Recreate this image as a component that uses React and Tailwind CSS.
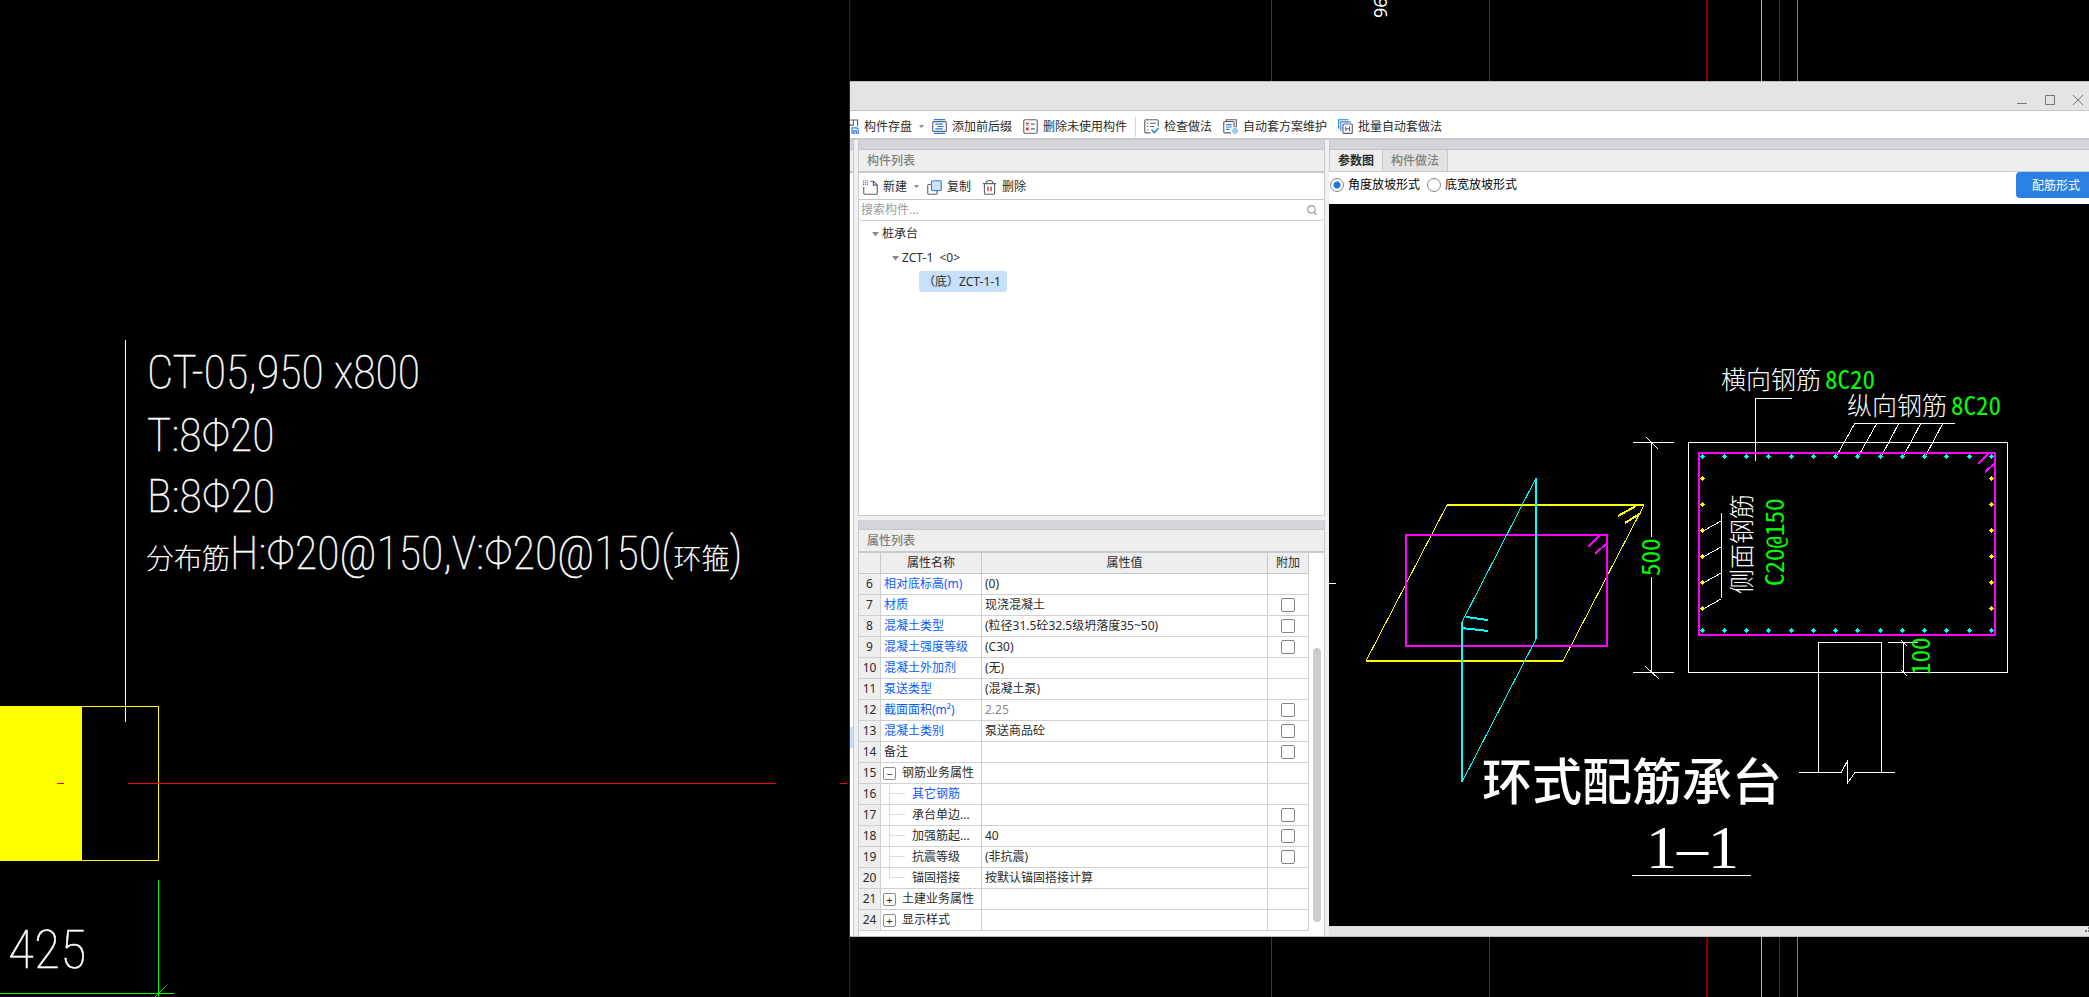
import { Fragment } from 'react';

const UI_FONT = "font-['Noto_Sans','Noto_Sans_CJK_SC',sans-serif]";

const gridLines = [
  { x: 1271, color: '#006400', w: 1 },
  { x: 1489, color: '#006400', w: 1 },
  { x: 1706, color: '#800000', w: 2 },
  { x: 1761, color: '#00ffff', w: 1 },
  { x: 1779, color: '#c00000', w: 1 },
  { x: 1797, color: '#00b4b4', w: 1 },
];

const properties = [
  { no: 6, name: '相对底标高(m)', value: '(0)', blue: true },
  { no: 7, name: '材质', value: '现浇混凝土', blue: true, check: true },
  { no: 8, name: '混凝土类型', value: '(粒径31.5砼32.5级坍落度35~50)', blue: true, check: true },
  { no: 9, name: '混凝土强度等级', value: '(C30)', blue: true, check: true },
  { no: 10, name: '混凝土外加剂', value: '(无)', blue: true },
  { no: 11, name: '泵送类型', value: '(混凝土泵)', blue: true },
  { no: 12, name: '截面面积(m²)', value: '2.25', blue: true, check: true, muted: true },
  { no: 13, name: '混凝土类别', value: '泵送商品砼', blue: true, check: true },
  { no: 14, name: '备注', value: '', check: true },
  { no: 15, name: '钢筋业务属性', value: '', group: '−' },
  { no: 16, name: '其它钢筋', value: '', blue: true, child: true },
  { no: 17, name: '承台单边...', value: '', child: true, check: true },
  { no: 18, name: '加强筋起...', value: '40', child: true, check: true },
  { no: 19, name: '抗震等级', value: '(非抗震)', child: true, check: true },
  { no: 20, name: '锚固搭接', value: '按默认锚固搭接计算', child: true, last: true },
  { no: 21, name: '土建业务属性', value: '', group: '+' },
  { no: 24, name: '显示样式', value: '', group: '+' },
];

const Caret = () => (
  <svg width="7" height="5" viewBox="0 0 7 5">
    <path d="M0 0h7L3.5 4.5z" fill="#8a8a8a" />
  </svg>
);

const Icon = ({ children }) => (
  <svg width="15" height="15" viewBox="0 0 16 16" fill="none" stroke="#5a6270" strokeWidth="1.2" className="shrink-0">
    {children}
  </svg>
);

const SaveIcon = () => (
  <Icon>
    <path d="M0 1h14.5v7M4 6.5h6V1" />
    <path d="M8.6 9.5h5l1.6 1.4v4.3H8.6z" stroke="#2b7de1" />
    <path d="M10.3 15v-2.3h3V15" stroke="#2b7de1" fill="#cfe2fa" />
  </Icon>
);

const AffixIcon = () => (
  <Icon>
    <path d="M2 .7h12M2 15.3h12" stroke="#2b7de1" />
    <rect x=".8" y="2.8" width="14.4" height="10.4" rx="1" />
    <path d="M3.5 5.5h8M5.5 8h7M3.5 10.5h8" stroke="#2b7de1" />
  </Icon>
);

const UnusedIcon = () => (
  <Icon>
    <rect x=".8" y=".8" width="14.4" height="14.4" rx="1.5" />
    <path d="M3.3 4l2.6 2.8M5.9 4L3.3 6.8M3.3 9.2L5.9 12M5.9 9.2L3.3 12" stroke="#d9262c" />
    <path d="M8.5 5.5h4M8.5 10.5h4" />
  </Icon>
);

const CheckIcon = () => (
  <Icon>
    <path d="M7 14.8H2.2a1.4 1.4 0 0 1-1.4-1.4V2.2A1.4 1.4 0 0 1 2.2.8h11.6a1.4 1.4 0 0 1 1.4 1.4V8" />
    <path d="M3 4.5h1.5M3 8h1.5M3 11.5h1.5M6.5 4.5H13M6.5 8h4" />
    <path d="M8 11.5l3 3 4.8-5" stroke="#2b7de1" strokeWidth="1.6" />
  </Icon>
);

const SchemeIcon = () => (
  <Icon>
    <path d="M3.5 2.5V.8h10.7V9" />
    <path d="M8.5 14.8H1.8a1 1 0 0 1-1-1V3.7a1 1 0 0 1 1-1h9a1 1 0 0 1 1 1V9" />
    <path d="M3.3 6h6M3.3 8.5h6M3.3 11h3.5" stroke="#2b7de1" />
    <circle cx="12.8" cy="12.8" r="2.6" fill="#a9cbf5" stroke="#7fb0ee" strokeDasharray="1.5 1" />
  </Icon>
);

const BatchIcon = () => (
  <Icon>
    <path d="M.7 10.5V.8h10.5M3 13V3h10.5" stroke="#2b7de1" />
    <rect x="5.3" y="5.3" width="10" height="10" rx="1" />
    <path d="M8.3 8v4.8M12.3 8v4.8M8.3 10.4h4" />
  </Icon>
);

const NewIcon = () => (
  <Icon>
    <path d="M7.5 1.3h3.7l4 4v8.7a1.2 1.2 0 0 1-1.2 1.2H2A1.2 1.2 0 0 1 .8 14V7.5M11 1.5v4h4" />
    <path d="M0 .8h5.4M0 2.8h5.4M0 4.8h5.4" stroke="#2b7de1" strokeDasharray="1.2 .9" strokeWidth="1.3" />
  </Icon>
);

const CopyIcon = () => (
  <Icon>
    <path d="M4 4.8H2A1.2 1.2 0 0 0 .8 6v8A1.2 1.2 0 0 0 2 15.2h7.5a1.2 1.2 0 0 0 1.2-1.2v-2.5" />
    <rect x="4.8" y=".8" width="10.4" height="10.4" rx="1.2" fill="#cfe2fa" stroke="#2b7de1" />
  </Icon>
);

const TrashIcon = () => (
  <Icon>
    <path d="M1 3.8h14M4.5 3.5a3.5 3 0 0 1 7 0M2.6 4v10a1.2 1.2 0 0 0 1.2 1.2h8.4a1.2 1.2 0 0 0 1.2-1.2V4" />
    <path d="M6.3 7v5M9.7 7v5" stroke="#d9262c" strokeWidth="1.4" />
  </Icon>
);

function ToolButton({ icon, label, caret }) {
  return (
    <button className="flex items-center gap-[5px] whitespace-nowrap">
      {icon}
      <span>{label}</span>
      {caret && (
        <svg width="5" height="4" viewBox="0 0 5 4" className="-mr-[3px] ml-0.5">
          <path d="M0 0h5L2.5 3.2z" fill="#8a8a8a" />
        </svg>
      )}
    </button>
  );
}

// vertical axis lines that run behind the dialog
function AxisStrip({ className, height, children }) {
  return (
    <div className={`overflow-hidden ${className}`}>
      <svg width="1239" height={height} viewBox={`850 0 1239 ${height}`} shapeRendering="crispEdges">
        {gridLines.map((l) => (
          <rect key={l.x} x={l.x} y="0" width={l.w} height={height} fill={l.color} />
        ))}
        {children}
      </svg>
    </div>
  );
}

function PlanView() {
  return (
    <svg width="849" height="997" viewBox="0 0 849 997" fill="none" shapeRendering="crispEdges">
      <path d="M125.5 340V722" stroke="#fff" />
      <rect x="0" y="706" width="82" height="155" fill="#ff0" />
      <path d="M0 706.5H158.5V860.5H0" stroke="#ff0" />
      <path d="M57 783.5h7M128 783.5H776M840 783.5h7" stroke="#f00" />
      <path d="M158.5 880V997M0 993.5H174M155 997l11-11" stroke="#0f0" />
      <g
        fill="#fff"
        stroke="#fff"
        strokeWidth="0.5"
        className="text-[46px] font-thin font-['Roboto_Condensed','Roboto','Noto_Sans_CJK_SC',sans-serif]"
      >
        <text x="147" y="388">CT-05,950 x800</text>
        <text x="147" y="451">T:8Φ20</text>
        <text x="147" y="512">B:8Φ20</text>
        <text x="146" y="569">
          <tspan className="text-[28px]">分布筋</tspan>H:Φ20@150,V:Φ20@150(<tspan className="text-[28px]">环箍</tspan>)
        </text>
        <text x="8" y="968" className="text-[54px]">425</text>
      </g>
    </svg>
  );
}

const barX = [1702, 1724, 1746, 1768, 1791, 1813, 1835, 1857, 1880, 1902, 1924, 1946, 1969, 1991];
const barY = [478, 504, 530, 556, 582, 608];

const Bar = ({ x, y, color }) => (
  <path d={`M${x - 2} ${y}h5v1h-5zM${x - 1} ${y - 1}h3v3h-3zM${x} ${y - 2}h1v5h-1z`} fill={color} stroke="none" />
);

function SectionDrawing() {
  return (
    <svg width="760" height="722" viewBox="1329 204 760 722" fill="none" shapeRendering="crispEdges">
      {/* hoop bars in axonometric view */}
      <path d="M1329 583.5h7" stroke="#fff" />
      <g stroke="#ff0">
        <path d="M1447 505L1366 661M1644 505L1563 661" />
        <path d="M1447 505H1644M1366 661H1563M1618 516L1636 506M1625 523L1641 513" strokeWidth="2" />
      </g>
      <g stroke="#f0f" strokeWidth="2">
        <rect x="1406" y="535" width="201" height="111" />
        <path d="M1588 547l12-12M1595 554l12-11" />
      </g>
      <g stroke="#0ff">
        <path d="M1536 478L1462 622M1536 639L1462 782" />
        <path d="M1536 478V639M1462 622V782M1466 617l22 3M1462 628l26 3" strokeWidth="2" />
      </g>

      {/* section 1-1 */}
      <g stroke="#fff">
        <path d="M1633 442.5h41M1633 672.5h41M1651.5 442V537M1651.5 577V672M1646 437l12 12M1645 666l14 13" />
        <rect x="1688.5" y="442.5" width="319" height="230" />
        <path d="M1755.5 461V398.5H1792" />
        <path d="M1855 423.5H1955M1855 423l-18 32M1877 423l-18 32M1899 423l-17 32M1921 423l-17 32M1943 423l-17 32" />
        <path d="M1721.5 513V598M1705 530l16-9M1705 556l16-9M1705 582l16-9M1705 608l16-9" />
        <path d="M1818.5 772V642.5H1881.5V772" />
        <path d="M1888 642.5h30M1903.5 642v30M1901 640l6 6M1901 670l6 6" />
        <path d="M1799 772.5H1841L1847.5 761V783L1855 772.5H1895" />
        <path d="M1632 875.5H1751" />
      </g>
      <g stroke="#f0f" strokeWidth="2">
        <rect x="1699" y="453" width="296" height="182" />
        <path d="M1978 464l10-10M1985 472l10-9" />
      </g>
      {barX.map((x) => (
        <Fragment key={x}>
          <Bar x={x} y={456} color="#0ff" />
          <Bar x={x} y={630} color="#0ff" />
        </Fragment>
      ))}
      {barY.map((y) => (
        <Fragment key={y}>
          <Bar x={1702} y={y} color="#ff0" />
          <Bar x={1991} y={y} color="#ff0" />
        </Fragment>
      ))}

      <g fill="#fff" className="font-['Noto_Sans_CJK_SC',sans-serif] text-[25px] font-light">
        <text x="1721" y="389">横向钢筋</text>
        <text x="1847" y="415">纵向钢筋</text>
        <text transform="translate(1751 594) rotate(-90)">侧面钢筋</text>
      </g>
      <g fill="#0f0" className="font-['Noto_Sans_Mono_CJK_SC','Liberation_Serif',serif] text-[25px] font-light">
        <text x="1825" y="389">8C20</text>
        <text x="1951" y="415">8C20</text>
        <text transform="translate(1660 576) rotate(-90)">500</text>
        <text transform="translate(1930 675) rotate(-90)">100</text>
        <text transform="translate(1784 586) rotate(-90)">C20@150</text>
      </g>
      <text x="1482" y="800" fill="#fff" className="font-['Noto_Sans_CJK_SC',sans-serif] text-[50px] font-medium">环式配筋承台</text>
      <text x="1646" y="868" fill="#fff" className="font-['Liberation_Serif',serif] text-[62px]">1–1</text>
    </svg>
  );
}

function NameCell({ row }) {
  if (row.group) {
    return (
      <div className="flex items-center gap-1.5 pl-0.5">
        <button className="flex size-[13px] items-center justify-center rounded-[2px] border border-[#8a8a8a] text-[11px] leading-none">
          {row.group}
        </button>
        <span>{row.name}</span>
      </div>
    );
  }
  if (row.child) {
    return (
      <div className="flex h-[20px] items-center pl-2">
        <div className="flex h-full w-4 flex-col">
          <div className="h-[10px] border-b border-l border-[#dcdcdc]"></div>
          {!row.last && <div className="flex-1 border-l border-[#dcdcdc]"></div>}
        </div>
        <span className="pl-[7px]">{row.name}</span>
      </div>
    );
  }
  return <span className="pl-[3px]">{row.name}</span>;
}

function PropertyTable() {
  return (
    <div className="flex flex-1 bg-white">
      <table className="flex-1 table-fixed border-separate border-spacing-0 self-start">
        <colgroup>
          <col className="w-[22px]" />
          <col className="w-[101px]" />
          <col />
          <col className="w-[41px]" />
        </colgroup>
        <thead>
          <tr className="h-[21px] bg-[#eee] [&>th]:border-r [&>th]:border-b [&>th]:border-[#c8c8c8] [&>th]:p-0 [&>th]:font-normal">
            <th></th>
            <th>属性名称</th>
            <th>属性值</th>
            <th>附加</th>
          </tr>
        </thead>
        <tbody>
          {properties.map((row) => (
            <tr key={row.no} className="h-[21px] [&>td]:border-r [&>td]:border-b [&>td]:border-[#d0d0d0] [&>td]:p-0 [&>td]:whitespace-nowrap">
              <td className="bg-[#eee] text-center">{row.no}</td>
              <td className={row.blue ? 'text-[#0a5cff]' : ''}>
                <NameCell row={row} />
              </td>
              <td className={row.muted ? 'text-[#8c8c8c]' : ''}>
                <span className="pl-[3px]">{row.value}</span>
              </td>
              <td>
                {row.check && (
                  <input type="checkbox" aria-label={row.name} className="mx-auto block size-[14px] appearance-none rounded-[2px] border border-[#858585] bg-white" />
                )}
              </td>
            </tr>
          ))}
        </tbody>
      </table>
      <div className="flex w-[15px] shrink-0 justify-center pt-[95px]">
        <div className="h-[274px] w-2 rounded-full bg-[#cdcdcd]"></div>
      </div>
    </div>
  );
}

function PanelTitle({ children }) {
  return (
    <>
      <div className="h-[10px] border-b border-[#c3c6cc] bg-[#d4d5db]"></div>
      <h2 className="flex h-[23px] items-center border-b-2 border-[#c8cacf] bg-[#eee] pl-2 font-medium text-[#808080]">{children}</h2>
    </>
  );
}

function ComponentColumn() {
  return (
    <div className="flex w-[467px] shrink-0 flex-col">
      <section className="flex h-[376px] flex-col border-x border-b border-[#c8cacf] bg-white">
        <PanelTitle>构件列表</PanelTitle>
        <div className="flex h-[27px] shrink-0 items-center gap-[11px] border-b border-[#c8c8c8] pt-0.5 pl-1">
          <ToolButton icon={<NewIcon />} label="新建" caret />
          <ToolButton icon={<CopyIcon />} label="复制" />
          <ToolButton icon={<TrashIcon />} label="删除" />
        </div>
        <label className="flex h-[21px] shrink-0 items-center rounded-sm border-b border-[#c8c8c8] pr-[7px] pl-0.5">
          <input type="text" placeholder="搜索构件..." aria-label="搜索构件" className="min-w-0 flex-1 outline-none placeholder:text-[#9a9a9a]" />
          <svg width="10" height="10" viewBox="0 0 10 10" fill="none" stroke="#999" strokeWidth="1.2">
            <circle cx="4.4" cy="4.4" r="3.7" />
            <path d="M6.8 7.2l2.7 2.4" />
          </svg>
        </label>
        <ul className="pt-px leading-6">
          <li>
            <div className="flex items-center gap-[3px] pl-[13px]"><Caret />桩承台</div>
            <ul>
              <li>
                <div className="flex items-center gap-[3px] pl-[33px]"><Caret />ZCT-1&nbsp; &lt;0&gt;</div>
                <ul>
                  <li className="pl-[60px]">
                    <span className="inline-block h-[21px] rounded-[3px] bg-[#c8dff9] pr-1.5 pl-1 leading-[21px]">（底）ZCT-1-1</span>
                  </li>
                </ul>
              </li>
            </ul>
          </li>
        </ul>
      </section>
      <section className="mt-1 flex flex-1 flex-col border-x border-[#c8cacf]">
        <PanelTitle>属性列表</PanelTitle>
        <PropertyTable />
      </section>
    </div>
  );
}

function DrawingColumn() {
  return (
    <div className="ml-1 flex min-w-0 flex-1 flex-col bg-white">
      <div className="h-[10px] border-b border-l border-[#c3c6cc] bg-[#d4d5db]"></div>
      <div className="flex h-[22px] border-b border-l border-[#c8cacf] bg-[#eee] font-bold">
        <button className="border-r border-[#c8cacf] px-2">参数图</button>
        <button className="border-r border-[#c8cacf] bg-[#e2e2e2] px-2 font-medium text-[#808080]">构件做法</button>
      </div>
      <div className="flex h-8 items-start text-black">
        <div className="flex h-[26px] items-center gap-[7px] pl-px">
          {['角度放坡形式', '底宽放坡形式'].map((label, i) => (
            <label key={label} className="flex items-center gap-1">
              <input
                type="radio"
                name="slope"
                defaultChecked={i === 0}
                className="size-[14px] appearance-none rounded-full border border-[#858585] bg-white checked:bg-[radial-gradient(circle,#1f7ae0_3px,#fff_4px)]"
              />
              {label}
            </label>
          ))}
        </div>
        <button className="ml-auto h-[26px] rounded-l bg-[#2b80e4] pt-px pr-[9px] pl-4 text-white">配筋形式</button>
      </div>
      <div className="flex-1 overflow-hidden bg-black">
        <SectionDrawing />
      </div>
      <div className="flex h-[10px] items-end justify-end bg-[#e4e4e4] pb-1">
        <svg width="4" height="5" viewBox="0 0 4 5" fill="#777">
          <path d="M0 3h2v2H0zM3 0h1v2H3zM3 3h1v2H3z" />
        </svg>
      </div>
    </div>
  );
}

function Dialog() {
  return (
    <div className={`flex h-[856px] flex-col border-t border-b border-[#bdbdbd] bg-[#f0f0f0] text-xs leading-[18px] text-[#2b2b2b] ${UI_FONT}`}>
      <div className="flex h-[29px] shrink-0 items-center justify-end gap-[18px] border-b border-[#c6c7ca] bg-[#e4e4e4] pt-2 pr-1.5">
        <button aria-label="最小化">
          <svg width="10" height="10" viewBox="0 0 10 10" stroke="#777"><path d="M0 8.5h10" /></svg>
        </button>
        <button aria-label="最大化">
          <svg width="10" height="10" viewBox="0 0 10 10" fill="none" stroke="#777"><path d="M.5.5h9v9h-9z" /></svg>
        </button>
        <button aria-label="关闭">
          <svg width="10" height="10" viewBox="0 0 10 10" stroke="#777"><path d="M0 0l10 10M10 0L0 10" /></svg>
        </button>
      </div>
      <div className="flex h-[29px] shrink-0 items-center gap-[11px] overflow-hidden border-b-2 border-[#c8cacf] bg-white pt-1">
        <div className="-ml-1.5"><ToolButton icon={<SaveIcon />} label="构件存盘" caret /></div>
        <ToolButton icon={<AffixIcon />} label="添加前后缀" />
        <ToolButton icon={<UnusedIcon />} label="删除未使用构件" />
        <span className="-mx-[3px] h-5 w-px bg-[#d8d8d8]"></span>
        <ToolButton icon={<CheckIcon />} label="检查做法" />
        <ToolButton icon={<SchemeIcon />} label="自动套方案维护" />
        <ToolButton icon={<BatchIcon />} label="批量自动套做法" />
      </div>
      <div className="flex min-h-0 flex-1">
        <div className="mr-1 flex w-1 shrink-0 flex-col border-r border-[#c8c8c8] bg-white">
          <div className="h-[10px] border-b border-[#c3c6cc] bg-[#d4d5db]"></div>
          <div className="h-[23px] border-b-2 border-[#c8cacf] bg-[#eee]"></div>
          <div className="mt-[554px] h-[21px] bg-[#c8dff9]"></div>
        </div>
        <ComponentColumn />
        <DrawingColumn />
      </div>
    </div>
  );
}

export default function App() {
  return (
    <div className="flex min-h-screen overflow-hidden bg-black">
      <div className="w-[850px] shrink-0 border-r border-[#2a2a2a]">
        <PlanView />
      </div>
      <div className="flex min-w-0 flex-1 flex-col">
        <AxisStrip className="h-[81px]" height={81}>
          <text transform="translate(1387 18) rotate(-90)" fill="#fff" className="font-['Noto_Sans',sans-serif] text-[18px]">96</text>
        </AxisStrip>
        <Dialog />
        <AxisStrip className="h-[60px]" height={60} />
      </div>
    </div>
  );
}
